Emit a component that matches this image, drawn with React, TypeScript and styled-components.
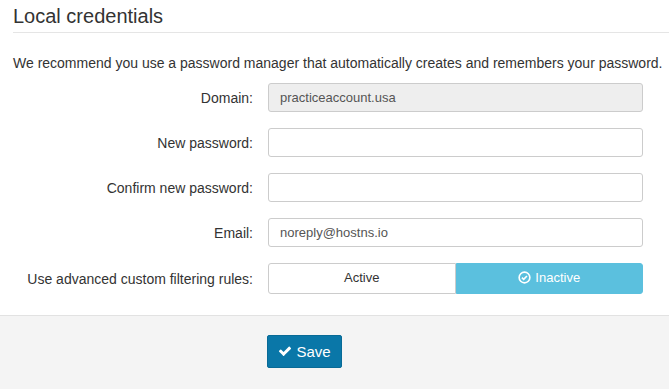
import React from "react";
import styled, { createGlobalStyle } from "styled-components";

const Global = createGlobalStyle`
  html, body { margin: 0; padding: 0; background: #fff; }
  body {
    font-family: "Liberation Sans", Arial, Helvetica, sans-serif;
    font-size: 14px;
    color: #333;
  }
`;

const Page = styled.div`
  width: 669px;
  height: 389px;
  display: flex;
  flex-direction: column;
  overflow: hidden;
`;

const Body = styled.div`
  padding: 0 0 0 13px;
`;

const Title = styled.h3`
  margin: 0;
  padding-top: 5px;
  font-size: 20px;
  font-weight: 400;
  line-height: 22px;
  color: #333;
`;

const Rule = styled.hr`
  margin: 5px 0 0 0;
  border: 0;
  border-top: 1px solid #e5e5e5;
`;

const Intro = styled.p`
  margin: 20px 0 10px;
  line-height: 20px;
`;

const Form = styled.div`
  display: grid;
  grid-template-columns: 240px 375px;
  column-gap: 15px;
  row-gap: 16px;
  align-items: center;
  padding-bottom: 21px;
`;

const Label = styled.label`
  text-align: right;
  font-size: 14px;
  color: #333;
`;

const Input = styled.div<{ $readOnly?: boolean }>`
  box-sizing: border-box;
  height: 29px;
  padding: 0 11px;
  display: flex;
  align-items: center;
  font-size: 13px;
  color: #555;
  background: ${(p) => (p.$readOnly ? "#eee" : "#fff")};
  border: 1px solid #ccc;
  border-radius: 3px;
`;

const Toggle = styled.div`
  display: grid;
  grid-template-columns: 1fr 1fr;
  height: 31px;
`;

const ToggleOption = styled.div<{ $on?: boolean }>`
  box-sizing: border-box;
  display: flex;
  align-items: center;
  justify-content: center;
  gap: 4px;
  font-size: 13px;
  padding-bottom: 2px;
  color: ${(p) => (p.$on ? "#fff" : "#333")};
  background: ${(p) => (p.$on ? "#5bc0de" : "#fff")};
  border: 1px solid ${(p) => (p.$on ? "#5bc0de" : "#ccc")};
  border-radius: ${(p) => (p.$on ? "0 3px 3px 0" : "3px 0 0 3px")};
`;

const Footer = styled.div`
  flex: 1;
  background: #f4f4f4;
  border-top: 1px solid #e2e2e2;
  padding: 19px 0 0 267px;
`;

const SaveButton = styled.button`
  box-sizing: border-box;
  width: 75px;
  height: 33px;
  display: flex;
  align-items: center;
  justify-content: center;
  gap: 4px;
  padding: 0 0 1px;
  font-family: inherit;
  font-size: 15px;
  color: #fff;
  background: #0a77a8;
  border: 1px solid #086a96;
  border-radius: 2px;
`;

const Check = () => (
  <svg width="14" height="14" viewBox="0 0 1792 1792" fill="#fff">
    <path d="M1671 566q0 40-28 68l-724 724-136 136q-28 28-68 28t-68-28l-136-136-362-362q-28-28-28-68t28-68l136-136q28-28 68-28t68 28l294 295 656-657q28-28 68-28t68 28l136 136q28 28 28 68z" />
  </svg>
);

const CheckCircle = () => (
  <svg width="13" height="13" viewBox="0 0 16 16" fill="none" stroke="#fff">
    <circle cx="8" cy="8" r="6.6" strokeWidth="2" />
    <path d="M4.8 8.2l2.2 2.1 4-4.2" strokeWidth="2" />
  </svg>
);

export default function App() {
  return (
    <Page>
      <Global />
      <Body>
        <Title>Local credentials</Title>
        <Rule />
        <Intro>
          We recommend you use a password manager that automatically creates and
          remembers your password.
        </Intro>
        <Form>
          <Label>Domain:</Label>
          <Input $readOnly>practiceaccount.usa</Input>
          <Label>New password:</Label>
          <Input />
          <Label>Confirm new password:</Label>
          <Input />
          <Label>Email:</Label>
          <Input>noreply@hostns.io</Input>
          <Label>Use advanced custom filtering rules:</Label>
          <Toggle>
            <ToggleOption>Active</ToggleOption>
            <ToggleOption $on>
              <CheckCircle />
              Inactive
            </ToggleOption>
          </Toggle>
        </Form>
      </Body>
      <Footer>
        <SaveButton>
          <Check />
          Save
        </SaveButton>
      </Footer>
    </Page>
  );
}
